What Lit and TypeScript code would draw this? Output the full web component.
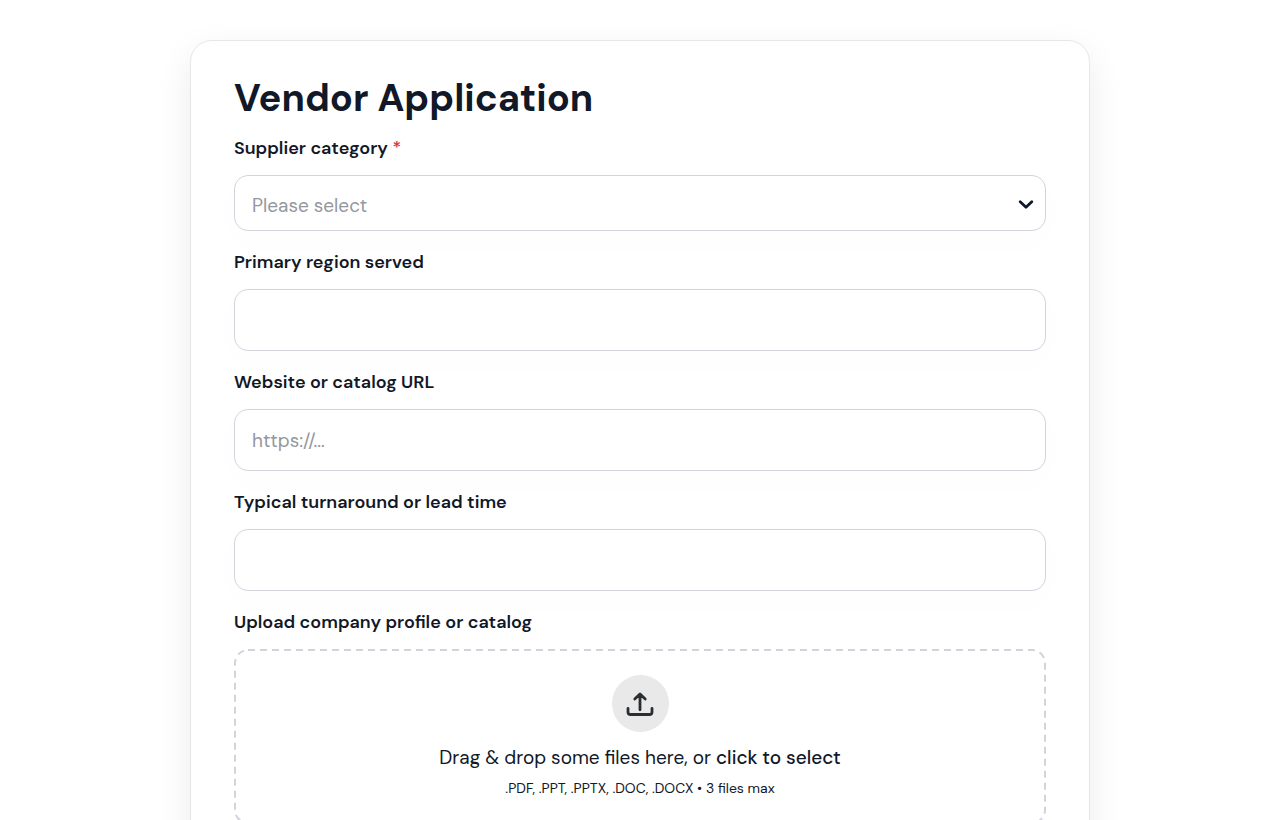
import { LitElement, html, css } from "lit";
import { customElement, property, state } from "lit/decorators.js";

const CATEGORIES = ["Materials", "Equipment", "Services", "Logistics"];

@customElement("app-root")
export class AppRoot extends LitElement {
  @property({ type: String }) heading = "Vendor Application";
  @state() private category = "";

  static styles = css`
    :host {
      display: block;
      min-height: 100vh;
      padding: 40px 24px;
      box-sizing: border-box;
      background: #fff;
      color: #111827;
      font-family: "DM Sans", Lato, "Open Sans", sans-serif;
      font-size: 19px;
    }
    *,
    *::before {
      box-sizing: border-box;
    }
    .card {
      max-width: 900px;
      margin: 0 auto;
      padding: 33px 43px 44px;
      border: 1px solid #e5e7eb;
      border-radius: 22px;
      background: #fff;
      box-shadow: 0 12px 36px rgba(0, 0, 0, 0.08);
    }
    .title {
      margin: 0 0 14px;
      font-size: 38px;
      line-height: 48px;
      font-weight: 700;
    }
    .form {
      display: flex;
      flex-direction: column;
      gap: 19px;
    }
    .field {
      display: flex;
      flex-direction: column;
      gap: 15px;
    }
    .label {
      font-size: 18px;
      line-height: 24px;
      font-weight: 600;
    }
    .required {
      color: #dc3545;
    }
    .control {
      width: 100%;
      height: 62px;
      margin: 0;
      padding: 0 17px;
      border: 1px solid #d1d5db;
      border-radius: 14px;
      background: #fff;
      color: inherit;
      font: inherit;
      box-shadow: 0 10px 36px rgba(16, 110, 80, 0.015);
    }
    .control::placeholder {
      color: #94979e;
      opacity: 1;
    }
    .picker {
      display: grid;
      align-items: center;
    }
    .picker > * {
      grid-area: 1 / 1;
    }
    .select {
      height: 56px;
      padding-top: 4px;
      appearance: none;
    }
    .select.empty {
      color: #94979e;
    }
    .chevron {
      justify-self: end;
      margin-right: 12px;
      pointer-events: none;
    }
    .drop {
      position: relative;
      display: flex;
      flex-direction: column;
      align-items: center;
      padding: 26px 20px;
      border-radius: 14px;
      cursor: pointer;
    }
    .dashes {
      position: absolute;
      inset: 0;
      width: 100%;
      height: 100%;
      overflow: visible;
      pointer-events: none;
    }
    .dashes rect {
      x: 1px;
      y: 1px;
      width: calc(100% - 2px);
      height: calc(100% - 2px);
      rx: 13px;
      fill: none;
      stroke: #d1d5db;
      stroke-width: 2px;
      stroke-dasharray: 7 5;
    }
    .badge {
      display: grid;
      place-items: center;
      width: 57px;
      height: 57px;
      margin-bottom: 12px;
      border-radius: 50%;
      background: #e9e9e9;
    }
    .prompt {
      line-height: 28px;
      text-align: center;
    }
    .strong {
      font-weight: 500;
    }
    .hint {
      margin-top: 6px;
      font-size: 14px;
      line-height: 20px;
    }
    .file {
      position: absolute;
      width: 1px;
      height: 1px;
      opacity: 0;
    }
  `;

  private onCategory(e: Event) {
    this.category = (e.target as HTMLSelectElement).value;
  }

  private textField(id: string, label: string, type = "text", placeholder = "") {
    return html`
      <div class="field">
        <label class="label" for=${id}>${label}</label>
        <input class="control" id=${id} type=${type} placeholder=${placeholder} />
      </div>
    `;
  }

  render() {
    return html`
      <main class="card">
        <h1 class="title">${this.heading}</h1>
        <form class="form">
          <div class="field">
            <label class="label" for="category"
              >Supplier category <span class="required">*</span></label
            >
            <div class="picker">
              <select
                class="control select ${this.category ? "" : "empty"}"
                id="category"
                required
                @change=${this.onCategory}
              >
                <option value="">Please select</option>
                ${CATEGORIES.map((c) => html`<option value=${c}>${c}</option>`)}
              </select>
              <svg class="chevron" width="16" height="16" viewBox="0 0 16 16" aria-hidden="true">
                <path
                  d="M2.2 6.8 8 12.2 13.8 6.8"
                  fill="none"
                  stroke="#0f172a"
                  stroke-width="2.8"
                  stroke-linecap="round"
                  stroke-linejoin="round"
                />
              </svg>
            </div>
          </div>
          ${this.textField("region", "Primary region served")}
          ${this.textField("website", "Website or catalog URL", "url", "https://...")}
          ${this.textField("lead", "Typical turnaround or lead time")}
          <div class="field">
            <label class="label" for="profile">Upload company profile or catalog</label>
            <label class="drop">
              <svg class="dashes" aria-hidden="true"><rect /></svg>
              <input
                class="file"
                id="profile"
                type="file"
                multiple
                accept=".pdf,.ppt,.pptx,.doc,.docx"
              />
              <span class="badge">
                <svg width="30" height="30" viewBox="0 0 30 30" aria-hidden="true">
                  <path
                    d="M15 20.8V5.5M9.8 10 15 5 20.2 10M3 19.5v3.4q0 2.6 2.6 2.6h18.8q2.6 0 2.6-2.6v-3.4"
                    fill="none"
                    stroke="#282e31"
                    stroke-width="2.8"
                    stroke-linecap="round"
                    stroke-linejoin="round"
                  />
                </svg>
              </span>
              <span class="prompt"
                >Drag &amp; drop some files here, or <span class="strong">click to select</span></span
              >
              <span class="hint">.PDF, .PPT, .PPTX, .DOC, .DOCX • 3 files max</span>
            </label>
          </div>
        </form>
      </main>
    `;
  }
}
